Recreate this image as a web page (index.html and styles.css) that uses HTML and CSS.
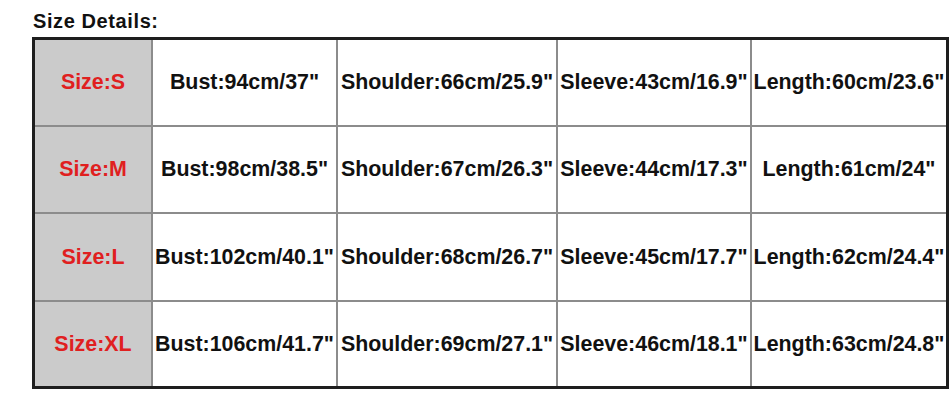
FILE: index.html
```html
<!DOCTYPE html>
<html>
<head>
<meta charset="utf-8">
<link rel="stylesheet" href="styles.css">
</head>
<body>
<div class="page">
  <h1 class="title">Size Details:</h1>
  <div class="chart">
    <div class="cell size">Size:S</div>
    <div class="cell">Bust:94cm/37"</div>
    <div class="cell">Shoulder:66cm/25.9"</div>
    <div class="cell">Sleeve:43cm/16.9"</div>
    <div class="cell">Length:60cm/23.6"</div>

    <div class="cell size">Size:M</div>
    <div class="cell">Bust:98cm/38.5"</div>
    <div class="cell">Shoulder:67cm/26.3"</div>
    <div class="cell">Sleeve:44cm/17.3"</div>
    <div class="cell">Length:61cm/24"</div>

    <div class="cell size">Size:L</div>
    <div class="cell">Bust:102cm/40.1"</div>
    <div class="cell">Shoulder:68cm/26.7"</div>
    <div class="cell">Sleeve:45cm/17.7"</div>
    <div class="cell">Length:62cm/24.4"</div>

    <div class="cell size">Size:XL</div>
    <div class="cell">Bust:106cm/41.7"</div>
    <div class="cell">Shoulder:69cm/27.1"</div>
    <div class="cell">Sleeve:46cm/18.1"</div>
    <div class="cell">Length:63cm/24.8"</div>
  </div>
</div>
</body>
</html>
```

FILE: styles.css
```css
html, body {
  margin: 0;
  padding: 0;
  background: #ffffff;
}

.page {
  padding: 9px 0 0 32px;
  font-family: "Liberation Sans", Arial, sans-serif;
}

.title {
  margin: 0 0 4px 1px;
  font-size: 20px;
  line-height: 24px;
  font-weight: bold;
  color: #111111;
  letter-spacing: 0.6px;
}

.chart {
  display: grid;
  width: max-content;
  grid-template-columns: 116px 183px 218px 192px 194px;
  grid-template-rows: 85px 85px 86px 84px;
  gap: 2px;
  background: #8c8c8c;
  border: 3px solid #1e1e1e;
}

.cell {
  display: flex;
  align-items: center;
  justify-content: center;
  background: #ffffff;
  font-size: 21.4px;
  font-weight: bold;
  color: #111111;
  white-space: nowrap;
}

.cell.size {
  background: #cbcbcb;
  color: #e0201f;
}
```
